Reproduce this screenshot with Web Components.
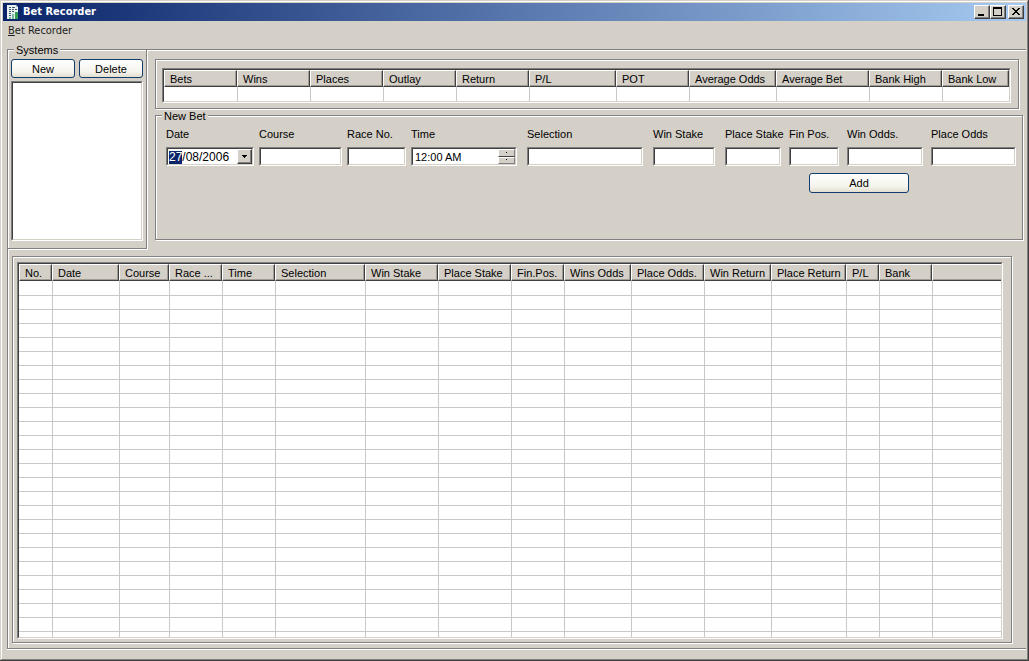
<!DOCTYPE html>
<html lang="en">
<head>
<meta charset="utf-8">
<title>Bet Recorder</title>
<style>
  html, body { margin: 0; height: 100%; }
  body {
    --face: #d4d0c8; --shade: #808080; --dark: #404040; --line: #c8c8c8; --navy: #0a246a;
    background: var(--face); color: #000; overflow: hidden;
    font: 11px/12px "Liberation Sans", Arial, sans-serif;
  }
</style>
</head>
<body>
<bet-app></bet-app>
<script>
const define = (name, html, setup) => {
  const tpl = document.createElement('template');
  tpl.innerHTML = html;
  customElements.define(name, class extends HTMLElement {
    constructor() {
      super();
      this.attachShadow({ mode: 'open' }).append(tpl.content.cloneNode(true));
    }
    connectedCallback() {
      if (this.ready) return;
      this.ready = true;
      if (setup) setup(this, this.shadowRoot);
    }
  });
};

/* Caption bar with icon, title and window buttons */
define('title-bar', `
<style>
  :host { display: flex; align-items: center; height: 18px; padding: 0 2px 0 4px; flex: none;
    background: linear-gradient(90deg, var(--navy), #a6caf0); color: #fff; }
  h1 { flex: 1; margin: 0 0 0 4px; font: bold 11px/18px "DejaVu Sans Condensed", "Noto Sans", sans-serif; }
  svg { display: block; }
  .btns { display: flex; }
  button { width: 16px; height: 14px; padding: 0; border: 1px solid; border-color: #fff var(--dark) var(--dark) #fff;
    box-shadow: inset -1px -1px 0 var(--shade); background: var(--face); border-radius: 0; }
  button:last-child { margin-left: 2px; }
</style>
<svg width="12" height="16" viewBox="0 0 12 16" aria-hidden="true">
  <path d="M0 1h9l2 2v12H0z" fill="#e8f0f0"/>
  <path d="M9 1v2h2z" fill="#9fb4c4"/>
  <path d="M2 3h2v1H2zM5 3h3v1H5zM2 5h2v1H2zM5 5h2v1H5zM8 5h2v1H8zM2 7h2v1H2zM5 7h2v1H5zM2 9h2v1H2zM2 11h2v1H2z" fill="#3c5a70"/>
  <path d="M2 13h2v2H2zM5 10h2v5H5z" fill="#7ab8a0"/><path d="M8 8h3v7H8z" fill="#30a050"/>
</svg>
<h1><slot></slot></h1>
<div class="btns">
  <button type="button" aria-label="Minimize"><svg width="14" height="12" shape-rendering="crispEdges"><path d="M3 8h6v2H3z"/></svg></button>
  <button type="button" aria-label="Maximize"><svg width="14" height="12" shape-rendering="crispEdges"><path fill-rule="evenodd" d="M2 1h9v9H2zM3 3v6h7V3z"/></svg></button>
  <button type="button" aria-label="Close"><svg width="14" height="12" shape-rendering="crispEdges"><path d="M3 2h2v1h1v1h2V3h1V2h2v1h-1v1H9v1H8v1h1v1h1v1h1v1H9V8H8V7H6v1H5v1H3V8h1V7h1V6h1V5H5V4H4V3H3z"/></svg></button>
</div>`);

define('menu-bar', `
<style>
  :host { display: flex; height: 20px; padding-left: 5px; flex: none; }
  button { border: 0; padding: 0; background: none; color: #222; font: 11px/20px "DejaVu Sans Condensed", "Noto Sans", sans-serif; }
</style>
<button type="button"><u>B</u>et Recorder</button>`);

/* Etched frame without a caption */
define('etched-frame', `
<style>
  :host { display: block; box-sizing: border-box; border: 1px solid var(--shade);
    box-shadow: 1px 1px 0 #fff, inset 1px 1px 0 #fff; }
</style><slot></slot>`);

/* Etched frame with a caption */
define('group-box', `
<style>
  :host { display: flex; }
  fieldset { flex: 1; min-width: 0; margin: 0; padding: 0; border: 1px solid var(--shade); background: var(--face);
    box-shadow: 1px 1px 0 #fff, inset 1px 1px 0 #fff; }
  legend { height: 11px; margin-left: 6px; padding: 0 2px; line-height: 12px; background: var(--face); }
</style>
<fieldset><legend></legend><slot></slot></fieldset>`,
(el, root) => { root.querySelector('legend').textContent = el.getAttribute('caption'); });

define('push-button', `
<style>
  :host { display: block; }
  button { display: block; width: 100%; height: 100%; padding: 0; border: 1px solid #123c6c; border-radius: 3px;
    background: linear-gradient(#fff, #f4f3ec 70%, #e2dfd0); color: #000; font: 11px/12px "Liberation Sans", Arial, sans-serif; }
</style>
<button type="button"><slot></slot></button>`);

define('list-box', `
<style>
  :host { display: block; border: 1px solid; border-color: var(--shade) #fff #fff var(--shade); }
  select { display: block; box-sizing: border-box; width: 100%; height: 100%; padding: 0; appearance: none; border-radius: 0; outline: 0;
    border: 1px solid; border-color: var(--dark) var(--face) var(--face) var(--dark); background: #fff; }
</style>
<select size="10" aria-label="Systems"></select>`);

/* Caption above a sunken text box; kind "date" adds a drop button, "time" a spinner */
define('bet-field', `
<style>
  :host { display: block; min-width: 0; }
  label { display: block; height: 12px; margin-bottom: 7px; white-space: nowrap; }
  .box { display: flex; height: 17px; border: 1px solid; border-color: var(--shade) #fff #fff var(--shade); background: #fff; }
  .in { flex: 1; display: flex; min-width: 0; border: 1px solid; border-color: var(--dark) var(--face) var(--face) var(--dark); }
  input { flex: 1; min-width: 0; width: 0; padding: 2px 0 0 2px; border: 0; outline: 0; background: none; color: #000;
    font: 11px/13px "Liberation Sans", Arial, sans-serif; }
  input.date { font-size: 12px; padding-left: 1px; }
  input::selection { background: var(--navy); color: #fff; }
  button { display: flex; align-items: center; justify-content: center; box-sizing: border-box; padding: 0; border: 1px solid; border-radius: 0;
    border-color: #fff var(--dark) var(--dark) #fff; background: var(--face); box-shadow: inset -1px -1px 0 var(--shade); }
  .drop { width: 15px; }
  .spin { display: flex; flex-direction: column; width: 17px; }
  .spin button { flex: 1; min-height: 0; box-shadow: none; border-color: #fff var(--shade) var(--shade) #fff; }
  .spin button:first-child { border-bottom-color: var(--dark); }
</style>
<label for="f"></label>
<div class="box"><div class="in"><input id="f" type="text"></div></div>`,
(el, root) => {
  root.querySelector('label').textContent = el.getAttribute('caption');
  const input = root.querySelector('input'), inner = root.querySelector('.in'), kind = el.getAttribute('kind');
  input.value = el.getAttribute('value') || '';
  if (kind === 'date') {
    input.className = 'date';
    inner.insertAdjacentHTML('beforeend', '<button class="drop" type="button" aria-label="Open calendar"><svg width="5" height="3" shape-rendering="crispEdges"><path d="M0 0h5v1H4v1H3v1H2V2H1V1H0z"/></svg></button>');
    input.focus();
    input.setSelectionRange(0, 2);
  }
  if (kind === 'time') {
    inner.insertAdjacentHTML('beforeend', '<div class="spin"><button type="button" aria-label="Later"><svg width="3" height="2" shape-rendering="crispEdges"><path d="M1 0h1v1H1z"/></svg></button><button type="button" aria-label="Earlier"><svg width="3" height="2" shape-rendering="crispEdges"><path d="M1 0h1v1H1z"/></svg></button></div>');
  }
});

/* Report-style list: columns="Name:width|..." and a number of empty rows */
define('report-list', `
<style>
  :host { display: block; box-sizing: border-box; min-width: 0; border: 1px solid; border-color: var(--shade) #fff #fff var(--shade); }
  .in { box-sizing: border-box; height: 100%; overflow: hidden; background: #fff; border: 1px solid;
    border-color: var(--dark) var(--face) var(--face) var(--dark); }
  table { width: 100%; table-layout: fixed; border-collapse: separate; border-spacing: 0; }
  th { box-sizing: border-box; height: 17px; padding: 1px 0 0 5px; background: var(--face); font-weight: normal; text-align: left;
    line-height: 13px; white-space: nowrap; border: 1px solid; border-color: #fff var(--dark) var(--dark) #fff;
    box-shadow: inset -1px -1px 0 #a09c94; }
  .open th:last-child { border-right: 0; box-shadow: inset 0 -1px 0 #a09c94; }
  td { box-sizing: border-box; height: 14px; padding: 0; border-left: 1px solid var(--line); border-bottom: 1px solid var(--line); }
  tbody tr:first-child td { height: 15px; }
  td:first-child { border-left: 0; }
</style>
<div class="in"><table><colgroup></colgroup><thead><tr></tr></thead><tbody></tbody></table></div>`,
(el, root) => {
  const cols = el.getAttribute('columns').split('|').map(c => c.split(':'));
  root.querySelector('colgroup').innerHTML = cols.map(c => c[1] ? `<col style="width:${c[1]}px">` : '<col>').join('');
  root.querySelector('thead tr').innerHTML = cols.map(c => `<th scope="col">${c[0]}</th>`).join('');
  root.querySelector('tbody').innerHTML = ('<tr>' + '<td></td>'.repeat(cols.length) + '</tr>').repeat(+el.getAttribute('rows'));
  if (el.hasAttribute('open-end')) root.querySelector('table').className = 'open';
});

define('bet-app', `
<style>
  :host { display: flex; flex-direction: column; box-sizing: border-box; height: 100vh; padding: 3px;
    box-shadow: inset -1px -1px 0 var(--dark), inset 1px 1px 0 var(--face), inset -2px -2px 0 var(--shade), inset 2px 2px 0 #fff; }
  .main { flex: 1; display: flex; flex-direction: column; min-height: 0; margin: 8px 0 9px 4px; border-right: 0; padding-bottom: 5px;
    box-shadow: 0 1px 0 #fff, inset 1px 1px 0 #fff; }
  .top { display: flex; gap: 8px; flex: none; }
  .systems { width: 140px; margin: -6px 0 0 -1px; flex: none; }
  .sys { display: grid; grid-template-columns: 1fr 1fr; gap: 3px 4px; padding: 4px 3px 7px; }
  .sys push-button { height: 19px; }
  .sys list-box { grid-column: 1 / -1; height: 158px; }
  .right { flex: 1; min-width: 0; display: flex; flex-direction: column; padding: 9px 3px 9px 0; }
  .stats { margin-right: 4px; padding: 8px 7px 5px 6px; }
  .stats report-list { height: 35px; }
  .newbet { flex: 1; margin-top: 1px; }
  .fields { display: grid; padding: 7px 6px 0 10px;
    grid-template-columns: 93fr 88fr 64fr 116fr 126fr 72fr 64fr 58fr 84fr 85fr; }
  .g5 { margin-right: 5px; } .g8 { margin-right: 8px; } .g10 { margin-right: 10px; }
  .add { width: 100px; height: 20px; margin: 7px 113px 0 auto; }
  .bets { flex: 1; min-height: 0; display: flex; margin: 7px 14px 0 4px; padding: 5px 8px 3px 4px; }
  .bets report-list { flex: 1; }
</style>
<title-bar>Bet Recorder</title-bar>
<menu-bar></menu-bar>
<etched-frame class="main">
  <div class="top">
    <group-box class="systems" caption="Systems">
      <div class="sys">
        <push-button>New</push-button><push-button>Delete</push-button>
        <list-box></list-box>
      </div>
    </group-box>
    <div class="right">
      <etched-frame class="stats">
        <report-list rows="1" columns="Bets:73|Wins:73|Places:73|Outlay:73|Return:73|P/L:87|POT:73|Average Odds:87|Average Bet:93|Bank High:73|Bank Low"></report-list>
      </etched-frame>
      <group-box class="newbet" caption="New Bet">
        <div class="fields">
          <bet-field class="g5" caption="Date" kind="date" value="27/08/2006"></bet-field>
          <bet-field class="g5" caption="Course"></bet-field>
          <bet-field class="g5" caption="Race No."></bet-field>
          <bet-field class="g10" caption="Time" kind="time" value="12:00 AM"></bet-field>
          <bet-field class="g10" caption="Selection"></bet-field>
          <bet-field class="g10" caption="Win Stake"></bet-field>
          <bet-field class="g8" caption="Place Stake"></bet-field>
          <bet-field class="g8" caption="Fin Pos."></bet-field>
          <bet-field class="g8" caption="Win Odds."></bet-field>
          <bet-field caption="Place Odds"></bet-field>
        </div>
        <push-button class="add">Add</push-button>
      </group-box>
    </div>
  </div>
  <etched-frame class="bets">
    <report-list open-end rows="30" columns="No.:33|Date:67|Course:50|Race ...:53|Time:53|Selection:90|Win Stake:73|Place Stake:73|Fin.Pos.:53|Wins Odds:67|Place Odds.:73|Win Return:67|Place Return:75|P/L:33|Bank:53|"></report-list>
  </etched-frame>
</etched-frame>`);
</script>
</body>
</html>
